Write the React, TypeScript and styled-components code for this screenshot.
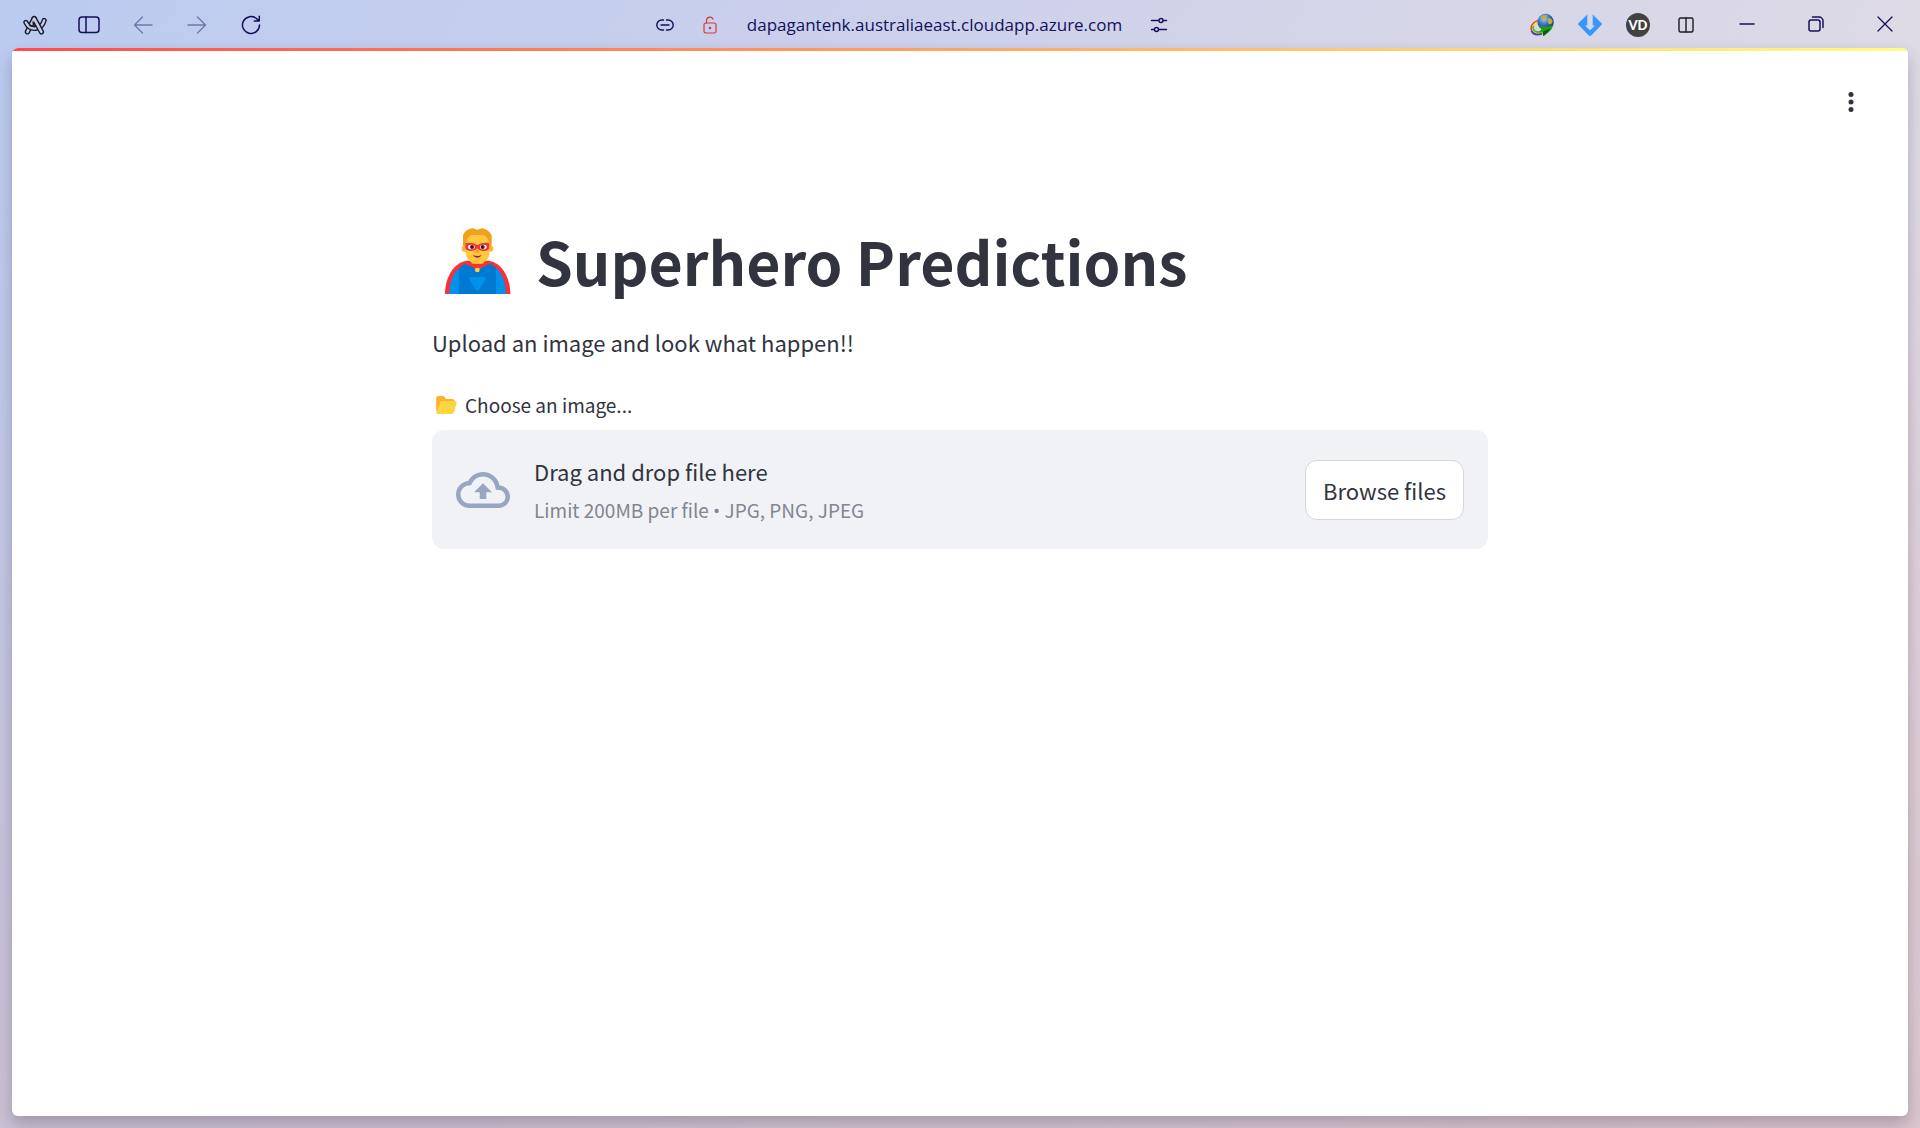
import React, { useRef } from "react";
import styled, { createGlobalStyle } from "styled-components";

const GlobalStyle = createGlobalStyle`
  *, *::before, *::after { box-sizing: border-box; }
  body { margin: 0; }
  button { font: inherit; color: inherit; border: 0; background: none; padding: 0; cursor: pointer; }
  svg { display: block; flex: none; }
`;

const ink = "#14105a";
const sans = `"Noto Sans CJK SC", "Noto Sans", sans-serif`;

const Window = styled.div`
  min-height: 100vh;
  display: flex;
  flex-direction: column;
  padding-bottom: 12px;
  background:
    linear-gradient(180deg, rgba(205, 178, 192, 0) 10%, rgba(205, 178, 192, 0.5) 100%),
    linear-gradient(125deg, #bacbf0 0%, #c9cfec 28%, #d3d4e8 48%, #dfdbe6 74%, #ead9df 100%);
`;

const TopBar = styled.header`
  height: 48px;
  display: flex;
  align-items: center;
  padding: 2px 1px 0 8px;
  color: ${ink};
`;

const Group = styled.div`
  display: flex;
  align-items: center;
`;

const Extensions = styled(Group)`
  margin-right: 2px;
`;

const Address = styled.div`
  flex: 1;
  display: flex;
  align-items: center;
  justify-content: center;
  padding-left: 28px;
`;

const BarButton = styled.button<{ $width: number; $faded?: boolean; $raised?: boolean }>`
  width: ${(p) => p.$width}px;
  height: ${(p) => (p.$raised ? 44 : 46)}px;
  display: flex;
  align-items: center;
  justify-content: center;
  opacity: ${(p) => (p.$faded ? 0.45 : 1)};
`;

const Url = styled.button`
  padding: 0 14px;
  font-family: "Open Sans", "Noto Sans", sans-serif;
  font-size: 17px;
  line-height: 24px;
`;

const WindowControls = styled(Group)`
  align-self: flex-start;
`;

const Page = styled.main`
  flex: 1;
  display: flex;
  flex-direction: column;
  margin: 0 12px;
  border-radius: 6px;
  overflow: hidden;
  background: #fff;
  color: #31333f;
  font-family: ${sans};
  box-shadow: 0 8px 16px rgba(50, 45, 60, 0.28);
`;

const Decoration = styled.div`
  height: 3px;
  background: linear-gradient(90deg, #ff4b4b, #fffd80);
`;

const AppHeader = styled.div`
  display: flex;
  justify-content: flex-end;
  padding: 30px 36px;
`;

const MenuButton = styled.button`
  width: 42px;
  height: 42px;
  display: flex;
  align-items: center;
  justify-content: center;
`;

const Content = styled.section`
  width: 100%;
  max-width: 1056px;
  margin: 0 auto;
  padding-top: 66px;
`;

const Title = styled.h1`
  margin: 0;
  display: flex;
  align-items: center;
  gap: 25px;
  padding-left: 13px;
  font-size: 59px;
  line-height: 84px;
  font-weight: 700;
`;

const Intro = styled.p`
  margin: 20px 0 27px;
  font-size: 22px;
  line-height: 38px;
`;

const UploadLabel = styled.label`
  display: flex;
  align-items: center;
  gap: 8px;
  padding: 0 4px;
  margin-bottom: 8px;
  font-size: 19px;
  line-height: 34px;
`;

const DropZone = styled.div`
  display: flex;
  align-items: center;
  gap: 24px;
  padding: 24px;
  border-radius: 12px;
  background: #f0f2f6;
`;

const DropText = styled.div`
  flex: 1;
  display: flex;
  flex-direction: column;
  gap: 8px;
`;

const DropTitle = styled.span`
  font-size: 22px;
  line-height: 34px;
`;

const DropHint = styled.span`
  font-size: 19px;
  line-height: 28px;
  color: #838590;
`;

const Bullet = styled.span`
  font-family: "Open Sans", sans-serif;
`;

const FileInput = styled.input`
  display: none;
`;

const BrowseButton = styled.button`
  height: 60px;
  padding: 0 17px;
  border: 1px solid #d6d6d9;
  border-radius: 12px;
  background: #fff;
  font-size: 22px;
  line-height: 36px;
`;

const stroke = { fill: "none", stroke: "currentColor", strokeLinecap: "round", strokeLinejoin: "round" } as const;

const ArcLogo = () => (
  <svg width="26" height="22" viewBox="0 0 26 22" fill="none" strokeLinecap="round" strokeLinejoin="round">
    <path d="M5.400 17.800 12.200 4.600" stroke="#1c1c26" strokeWidth="5.400" />
    <path d="M5.400 17.800 12.200 4.600" stroke="#c1ccee" strokeWidth="2.600" />
    <path d="M3.900 8.400c2 4.200 5.600 6.400 9.700 6 4.200-.4 7.400-3.600 8.600-8" stroke="#1c1c26" strokeWidth="5.200" />
    <path d="M3.900 8.400c2 4.200 5.600 6.400 9.700 6 4.200-.4 7.400-3.600 8.600-8" stroke="#c1ccee" strokeWidth="2.400" />
    <path d="M12.200 4.600 19.400 17.800" stroke="#1c1c26" strokeWidth="5.400" />
    <path d="M11.400 6.200 12.200 4.600 19.400 17.800" stroke="#c1ccee" strokeWidth="2.600" />
    <path d="M8 11.600q2.200 1.200 4.800 1L11 9" stroke="#1c1c26" strokeWidth="1.400" />
  </svg>
);

const SidebarIcon = () => (
  <svg width="22" height="18" viewBox="0 0 22 18" {...stroke} strokeWidth="1.500">
    <rect x="1" y="1" width="20" height="15.500" rx="3" />
    <path d="M8 1v15.500" />
  </svg>
);

const ArrowIcon = ({ flip }: { flip?: boolean }) => (
  <svg width="20" height="18" viewBox="0 0 20 18" {...stroke} strokeWidth="1.300">
    <path d={flip ? "M1 9h17.500M10.500 1l8 8-8 8" : "M19 9H1.500M9.500 1l-8 8 8 8"} />
  </svg>
);

const ReloadIcon = () => (
  <svg width="20" height="20" viewBox="0 0 20 20" {...stroke} strokeWidth="1.500">
    <path d="M18.500 10a8.500 8.500 0 1 1-3-6.500L18 6M18.300 1.200V6h-5" />
  </svg>
);

const LinkIcon = () => (
  <svg width="18" height="12" viewBox="0 0 18 12" {...stroke} strokeWidth="1.400">
    <path d="M7.500 1H5.800a5 5 0 0 0 0 10h1.700M10.500 1h1.700a5 5 0 0 1 0 10h-1.700M5 6h8" />
  </svg>
);

const LockIcon = () => (
  <svg width="14" height="18" viewBox="0 0 14 18" {...stroke} stroke="#d83a34" strokeWidth="1.200">
    <rect x="1" y="7" width="12" height="10" rx="1.800" />
    <path d="M3.500 7V4.500a3.400 3.400 0 0 1 6.500-1.400" />
    <circle cx="7" cy="12" r=".7" fill="#d83a34" />
  </svg>
);

const TuneIcon = () => (
  <svg width="18" height="16" viewBox="0 0 18 16" {...stroke} strokeWidth="1.400">
    <path d="M1.500 3.500h7M13.500 3.500h3M1.500 12.500h2.500M9 12.500h7.500" />
    <circle cx="11" cy="3.500" r="2" />
    <circle cx="6.500" cy="12.500" r="2" />
  </svg>
);

const GlobeIcon = () => (
  <svg width="24" height="24" viewBox="0 0 24 24" fill="none">
    <defs>
      <radialGradient id="globe" cx=".4" cy=".3" r=".75">
        <stop offset="0" stopColor="#b9d0f0" />
        <stop offset=".4" stopColor="#4a7cc8" />
        <stop offset="1" stopColor="#122a62" />
      </radialGradient>
    </defs>
    <ellipse cx="9.500" cy="14" rx="8.600" ry="6.600" transform="rotate(-22 9.500 14)" stroke="#e33a2c" strokeWidth="1.500" />
    <ellipse cx="9.800" cy="14" rx="7.300" ry="5.400" transform="rotate(-22 9.800 14)" stroke="#ffd930" strokeWidth="1.600" />
    <path d="M3.500 13c-1.500 5 3 7 8 5.800" stroke="#3fbe2f" strokeWidth="1.700" />
    <path d="M1.400 18c2 4.400 7 4 10.500 3" stroke="#204fae" strokeWidth="1.800" />
    <circle cx="15.600" cy="9" r="8.200" fill="url(#globe)" />
    <path d="M10.500 4c2-2.200 5.500-2.600 7-1.400-.5 2-2.500 2-3 4-1.500 1-3 .5-4-2.600zM18 5.500c2-.6 4 .6 4.600 3-.6 2.500-2 3-3.600 2.500-1.300-1.500-2-3.500-1-5.500z" fill="#b8b23a" />
    <path d="M9 12.600c4 1.600 9 1.600 14.300-.6-1.300 5-5 8-10 11.200l-.5-4.400c-1.600.3-3 .2-4.300-.3 2-.7 3-1.700 3.400-3.200-1.200-.5-2.200-1.400-2.900-2.700z" fill="#16a516" />
    <path d="m12.800 18.800 7.500-3.500c-1.800 3-4 5.400-7 7.800z" fill="#075c10" />
  </svg>
);

const DownloadIcon = () => (
  <svg width="24" height="24" viewBox="0 0 24 24" fill="#3798fb">
    <path d="M9.300 1.400v11.200H6.900l5.100 4.700 5.100-4.700h-2.400V1.400l9.100 9.100c.3.300.3.700 0 1L13.500 22.300c-.8.800-2.200.8-3 0L.2 11.500a.7.700 0 0 1 0-1z" />
  </svg>
);

const BadgeIcon = () => (
  <svg width="24" height="24" viewBox="0 0 24 24">
    <circle cx="12" cy="12" r="12" fill="#424242" />
    <text x="12" y="16.500" textAnchor="middle" fill="#fff" fontFamily="Lato, sans-serif" fontWeight="900" fontSize="13">
      VD
    </text>
  </svg>
);

const SplitIcon = () => (
  <svg width="16" height="16" viewBox="0 0 16 16" {...stroke} stroke="#1c1c22" strokeWidth="1.400">
    <rect x="1" y="1" width="14" height="14" rx="1.500" />
    <path d="M8 1v14" />
  </svg>
);

const MinimizeIcon = () => (
  <svg width="16" height="16" viewBox="0 0 16 16" {...stroke} strokeWidth="1.500">
    <path d="M1 8h14" />
  </svg>
);

const RestoreIcon = () => (
  <svg width="16" height="16" viewBox="0 0 16 16" {...stroke} strokeWidth="1.500">
    <rect x="1" y="4" width="11" height="11" rx="2" />
    <path d="M4.500 1H11a4 4 0 0 1 4 4v6.500" />
  </svg>
);

const CloseIcon = () => (
  <svg width="16" height="16" viewBox="0 0 16 16" {...stroke} strokeWidth="1.300">
    <path d="m1 1 14 14M15 1 1 15" />
  </svg>
);

const KebabIcon = () => (
  <svg width="6" height="20" viewBox="0 0 6 20" fill="currentColor">
    <circle cx="3" cy="2.500" r="2.500" />
    <circle cx="3" cy="10" r="2.500" />
    <circle cx="3" cy="17.500" r="2.500" />
  </svg>
);

const HeroIcon = () => (
  <svg width="66" height="66" viewBox="0 0 198 198" role="img" aria-label="Superhero">
    <path d="M0 198C0 150 25 103 66 98h64c41 5 66 52 66 100z" fill="#fb2f36" />
    <path d="M13 198c0-45 18-76 49-90l35 14 38-14c30 14 48 45 48 90z" fill="#0091ea" />
    <path d="M42 198v-76c7-7 13-11 20-14l35 14 38-14c7 3 13 7 18 12v78z" fill="#0079d3" />
    <path d="M79 94h38v18l-19 16-19-16z" fill="#ff9c0a" />
    <path d="m66 98 17 10h30l17-10 4 10-37 16-35-16z" fill="#fb2f36" />
    <circle cx="59" cy="62" r="9" fill="#ffb42c" />
    <circle cx="136" cy="62" r="9" fill="#ffb42c" />
    <path d="M62 16h72v54c0 24-16 37-36 37S62 94 62 70z" fill="#ffc83d" />
    <path d="M54 54V22C60 7 72 2 84 1l13 4 14-4c13 2 23 9 29 21v32h-6c-2-18-8-28-18-33H80C69 26 64 36 61 54z" fill="#f2a11f" />
    <path d="M61 46q17-5 36 5 19-10 36-5v15q-4 8-17 8-13 0-19-8-6 8-18 8-14 0-18-8z" fill="#f5323b" />
    <ellipse cx="79" cy="57" rx="10" ry="7" fill="#fff" />
    <ellipse cx="115" cy="57" rx="10" ry="7" fill="#fff" />
    <circle cx="81" cy="57" r="6" fill="#401a1a" />
    <circle cx="113" cy="57" r="6" fill="#401a1a" />
    <path d="m97 62-7 12h14z" fill="#ff9c0a" />
    <path d="M84 81q13 6 26 0-4 8-13 8t-13-8z" fill="#a51440" />
    <circle cx="97" cy="126" r="7" fill="#ffd23e" />
    <path d="M77 147h41q6 0 4 6l-20 33q-5 6-10 0l-19-33q-2-6 4-6z" fill="#0091ea" />
  </svg>
);

const FolderIcon = () => (
  <svg width="21" height="18" viewBox="0 0 62 54">
    <path d="M0 6q0-6 6-6h14q4 0 6 4l3 5h20q6 0 6 6v30H0z" fill="#ffb02e" />
    <path d="M12 20q1-5 6-5h39q6 0 4 6l-8 28q-1 5-6 5H4q-5 0-3-6z" fill="#fcd53f" />
  </svg>
);

const CloudUploadIcon = () => (
  <svg width="54" height="54" viewBox="0 0 24 24" fill="#98a6c3">
    <path d="M19.350 10.040A7.490 7.490 0 0 0 12 4C9.110 4 6.600 5.640 5.350 8.040A5.994 5.994 0 0 0 0 14c0 3.310 2.690 6 6 6h13c2.760 0 5-2.240 5-5 0-2.640-2.050-4.780-4.650-4.960zM19 18H6c-2.210 0-4-1.790-4-4 0-2.050 1.530-3.760 3.560-3.970l1.070-.11.5-.95A5.469 5.469 0 0 1 12 6c2.620 0 4.880 1.860 5.390 4.430l.3 1.500 1.530.11A2.980 2.980 0 0 1 22 15c0 1.650-1.350 3-3 3zM8 13h2.550v3h2.900v-3H16l-4-4z" />
  </svg>
);

export default function App() {
  const fileInput = useRef<HTMLInputElement>(null);

  return (
    <Window>
      <GlobalStyle />
      <TopBar>
        <Group>
          <BarButton $width={54} aria-label="Arc menu"><ArcLogo /></BarButton>
          <BarButton $width={54} aria-label="Toggle sidebar"><SidebarIcon /></BarButton>
          <BarButton $width={54} $faded aria-label="Back"><ArrowIcon /></BarButton>
          <BarButton $width={54} $faded aria-label="Forward"><ArrowIcon flip /></BarButton>
          <BarButton $width={54} aria-label="Reload"><ReloadIcon /></BarButton>
        </Group>
        <Address>
          <BarButton $width={45} aria-label="Copy link"><LinkIcon /></BarButton>
          <BarButton $width={45} aria-label="Connection not secure"><LockIcon /></BarButton>
          <Url>dapagantenk.australiaeast.cloudapp.azure.com</Url>
          <BarButton $width={45} aria-label="Site controls"><TuneIcon /></BarButton>
        </Address>
        <Extensions>
          <BarButton $width={48} aria-label="Download manager"><GlobeIcon /></BarButton>
          <BarButton $width={48} aria-label="Downloader"><DownloadIcon /></BarButton>
          <BarButton $width={48} aria-label="Video downloader"><BadgeIcon /></BarButton>
          <BarButton $width={48} aria-label="Split view"><SplitIcon /></BarButton>
        </Extensions>
        <WindowControls>
          <BarButton $width={69} $raised aria-label="Minimize"><MinimizeIcon /></BarButton>
          <BarButton $width={69} $raised aria-label="Restore"><RestoreIcon /></BarButton>
          <BarButton $width={69} $raised aria-label="Close"><CloseIcon /></BarButton>
        </WindowControls>
      </TopBar>
      <Page>
        <Decoration />
        <AppHeader>
          <MenuButton aria-label="Main menu"><KebabIcon /></MenuButton>
        </AppHeader>
        <Content>
          <Title>
            <HeroIcon />
            Superhero Predictions
          </Title>
          <Intro>Upload an image and look what happen!!</Intro>
          <UploadLabel htmlFor="image-file">
            <FolderIcon />
            Choose an image...
          </UploadLabel>
          <DropZone>
            <CloudUploadIcon />
            <DropText>
              <DropTitle>Drag and drop file here</DropTitle>
              <DropHint>Limit 200MB per file <Bullet>•</Bullet> JPG, PNG, JPEG</DropHint>
            </DropText>
            <FileInput ref={fileInput} id="image-file" type="file" accept=".jpg,.png,.jpeg" />
            <BrowseButton type="button" onClick={() => fileInput.current?.click()}>
              Browse files
            </BrowseButton>
          </DropZone>
        </Content>
      </Page>
    </Window>
  );
}
